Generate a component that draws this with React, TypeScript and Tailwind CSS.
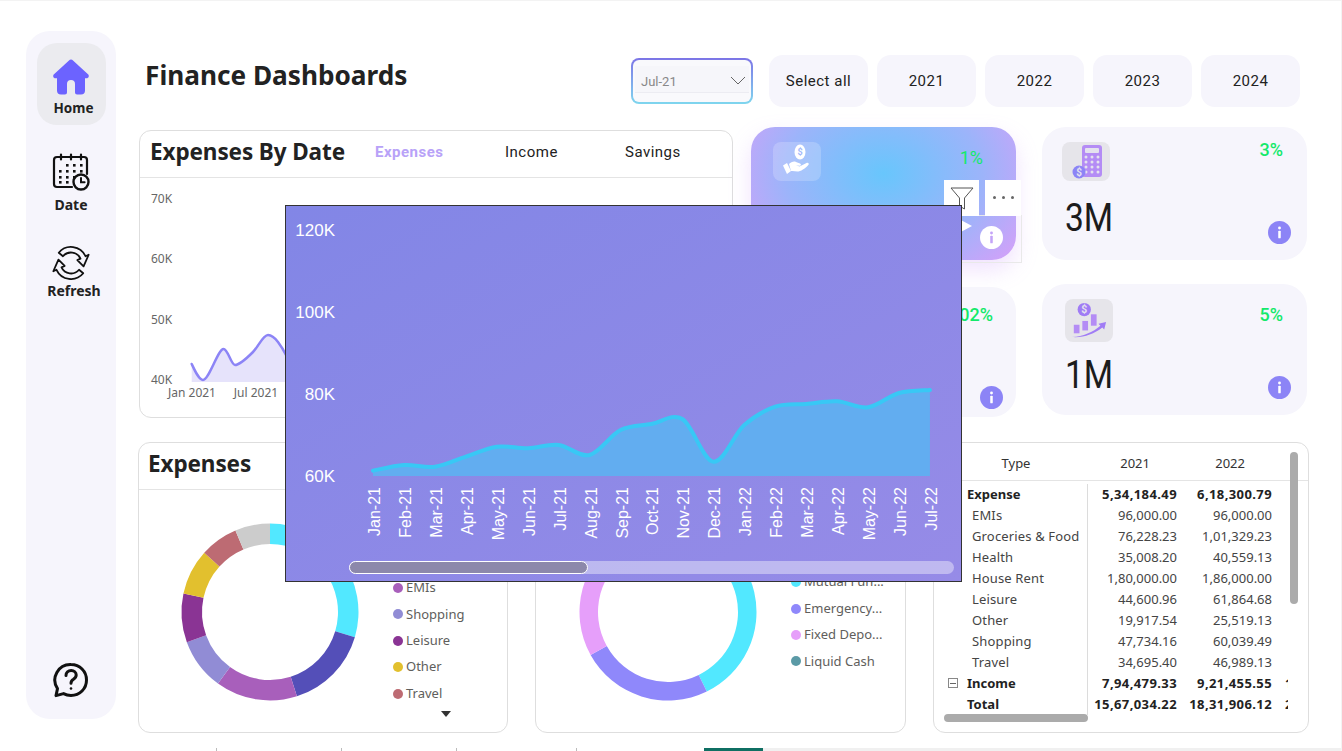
import { useMemo } from "react";

const bodyFont = "font-['Noto_Sans','Open_Sans',sans-serif]";
const dinFont = "font-['Roboto',sans-serif]";

const months = [
  "Jan-21", "Feb-21", "Mar-21", "Apr-21", "May-21", "Jun-21", "Jul-21", "Aug-21", "Sep-21", "Oct-21",
  "Nov-21", "Dec-21", "Jan-22", "Feb-22", "Mar-22", "Apr-22", "May-22", "Jun-22", "Jul-22",
];
const trend = [470.7, 465, 466.7, 456.7, 446.7, 448.3, 445, 455, 430, 424, 419, 461.7, 425, 406.7, 404, 401.3, 407.3, 393, 390];

const smooth = (pts: number[][]) => {
  let d = `M${pts[0][0]} ${pts[0][1]}`;
  for (let i = 0; i < pts.length - 1; i++) {
    const p0 = pts[Math.max(i - 1, 0)];
    const p1 = pts[i];
    const p2 = pts[i + 1];
    const p3 = pts[Math.min(i + 2, pts.length - 1)];
    const c1 = [p1[0] + (p2[0] - p0[0]) / 6, p1[1] + (p2[1] - p0[1]) / 6];
    const c2 = [p2[0] - (p3[0] - p1[0]) / 6, p2[1] - (p3[1] - p1[1]) / 6];
    d += ` C${c1[0]} ${c1[1]} ${c2[0]} ${c2[1]} ${p2[0]} ${p2[1]}`;
  }
  return d;
};

const polar = (r: number, deg: number) => {
  const a = ((deg - 90) * Math.PI) / 180;
  return [100 + r * Math.cos(a), 100 + r * Math.sin(a)];
};

const Donut = ({ segments, inner }: { segments: [number, number, string][]; inner: number }) => (
  <svg viewBox="0 0 200 200" className="h-[200px] w-[200px] shrink-0">
    {segments.map(([from, to, color]) => {
      const [ax, ay] = polar(88.5, from);
      const [bx, by] = polar(88.5, to);
      const [cx, cy] = polar(inner, to);
      const [dx, dy] = polar(inner, from);
      const large = to - from > 180 ? 1 : 0;
      return (
        <path
          key={`${color}${from}`}
          fill={color}
          d={`M${ax} ${ay} A88.5 88.5 0 ${large} 1 ${bx} ${by} L${cx} ${cy} A${inner} ${inner} 0 ${large} 0 ${dx} ${dy} Z`}
        />
      );
    })}
  </svg>
);

const Legend = ({ items, className }: { items: [string, string][]; className: string }) => (
  <div className={`flex flex-col ${className}`}>
    {items.map(([label, color]) => (
      <div key={label} className="flex h-[26.4px] items-center gap-[3px] text-[13px] text-[#605e5c]">
        <span className="h-[10px] w-[10px] rounded-full" style={{ backgroundColor: color }} />
        <span>{label}</span>
      </div>
    ))}
  </div>
);

const InfoDot = ({ light }: { light?: boolean }) => (
  <div className={`flex h-[23px] w-[23px] items-center justify-center rounded-full ${light ? "bg-white" : "bg-[#8c84f6]"}`}>
    <svg viewBox="0 0 10 14" className="h-[13px] w-[9px]">
      <circle cx="5" cy="2" r="1.6" fill={light ? "#c3a3f8" : "#fff"} />
      <rect x="3.6" y="5" width="2.8" height="8.5" rx="1" fill={light ? "#c3a3f8" : "#fff"} />
    </svg>
  </div>
);

const HomeIcon = () => (
  <svg viewBox="0 0 38 38" className="h-[38px] w-[38px]">
    <path
      d="M19 1.5c.8 0 1.5.3 2 .9L36 16.2c1.6 1.5.7 4-1.5 4H33v12.3a4 4 0 0 1-4 4h-4a2 2 0 0 1-2-2V26a4 4 0 0 0-8 0v8.500a2 2 0 0 1-2 2H9a4 4 0 0 1-4-4V20.200H3.500c-2.200 0-3.100-2.500-1.500-4L17 2.400c.5-.6 1.200-.9 2-.9Z"
      fill="#6c63ff"
    />
  </svg>
);

const CalendarIcon = () => (
  <svg viewBox="0 0 38 38" className="h-[38px] w-[38px]" fill="none" stroke="#111" strokeWidth="2.200" strokeLinecap="round">
    <path d="M20 34H5a3 3 0 0 1-3-3V7a3 3 0 0 1 3-3h27a3 3 0 0 1 3 3v14" />
    <path d="M9 1.500v5M19 1.500v5M29 1.500v5" />
    <g fill="#111" stroke="none">
      {[14, 21, 28].map((x) => <rect key={`a${x}`} x={x} y="11" width="2.6" height="2.6" />)}
      {[7, 14, 21, 28].map((x) => <rect key={`b${x}`} x={x} y="17" width="2.6" height="2.600" />)}
      {[7, 14, 21].map((x) => <rect key={`c${x}`} x={x} y="23" width="2.6" height="2.6" />)}
      <rect x="7" y="28" width="2.6" height="2.6" />
      <rect x="14" y="28" width="2.6" height="2.6" />
    </g>
    <circle cx="29" cy="29" r="7.500" strokeWidth="2.400" fill="#f6f5fc" />
    <path d="M29 25v4.300h3.600" strokeWidth="2" />
  </svg>
);

const RefreshIcon = () => (
  <svg viewBox="0 0 40 36" className="h-[36px] w-[40px]" fill="none" stroke="#111" strokeWidth="1.800" strokeLinejoin="round">
    <path d="M7.740 7.710A16 16 0 0 1 34.500 11.200L37.670 9.760 32.560 21.370 26.340 15.040 29.500 13.560A10.500 10.500 0 0 0 11.960 11.250Z" />
    <path d="M32.260 28.290A16 16 0 0 1 5.500 24.800L2.330 26.240 7.440 14.630 13.660 20.960 10.500 22.440A10.500 10.500 0 0 0 28.040 24.750Z" />
  </svg>
);

const HelpIcon = () => (
  <svg viewBox="0 0 36 36" className="h-[36px] w-[36px]" fill="none" stroke="#111" strokeWidth="3" strokeLinecap="round">
    <path d="M18 2.500c8.800 0 15.500 6.800 15.500 15.500S26.800 33.500 18 33.500c-2.800 0-5.300-.7-7.500-1.900l-7.500 2 1.500-7A15.500 15.500 0 0 1 18 2.500Z" strokeLinejoin="round" />
    <path d="M13 13.500c0-3 2.300-5 5.200-5s5 1.900 5 4.600c0 2-1.100 3.100-2.700 4.200-1.700 1.100-2.500 2-2.500 4" />
    <circle cx="18" cy="26.500" r="1.300" fill="#111" stroke="none" />
  </svg>
);

const HandIcon = () => (
  <svg viewBox="0 0 30 34" className="h-[34px] w-[30px]" fill="#fff">
    <ellipse cx="18" cy="8" rx="5.500" ry="7.500" />
    <path d="M1 21.500l4-2.500 4 8-4 3Z" />
    <path d="M7 20c2-2 5-3 7-2l4 1.500c1.500.5 1 2.500-.5 2.300l-3.500-.5 3.500 1.200 7-3.500c1.500-.7 3 .6 2 1.800-2 2.200-6 6-10 6.700-2.500.4-5-1-7.500-.5Z" />
    <text x="18" y="11" textAnchor="middle" fontSize="9" fontWeight="700" fill="#a3b8fb" fontFamily="Roboto, sans-serif">$</text>
  </svg>
);

const CalcIcon = () => (
  <svg viewBox="0 0 40 36" className="h-[36px] w-[40px]">
    <rect x="16" y="2" width="20" height="32" rx="3" fill="#b48cf5" />
    <rect x="19" y="5" width="14" height="5" rx="1" fill="#e4e2ee" />
    {[14, 19, 24, 29].map((y) => [20, 26, 32].map((x) => <circle key={`${x}${y}`} cx={x} cy={y} r="1.500" fill="#e4e2ee" />))}
    <circle cx="13" cy="29" r="6.500" fill="#8c84f6" />
    <text x="13" y="32.500" textAnchor="middle" fontSize="10" fontWeight="700" fill="#e4e2ee" fontFamily="Roboto, sans-serif">$</text>
  </svg>
);

const GrowthIcon = () => (
  <svg viewBox="0 0 40 40" className="h-[38px] w-[38px]">
    <circle cx="15" cy="9" r="7" fill="#a07cf5" />
    <text x="15" y="13" textAnchor="middle" fontSize="11" fontWeight="700" fill="#e4e2ee" fontFamily="Roboto, sans-serif">$</text>
    <rect x="4" y="25" width="6" height="9" fill="#b48cf5" />
    <rect x="13" y="21" width="6" height="10" fill="#b48cf5" />
    <rect x="22" y="14" width="6" height="12" fill="#b48cf5" />
    <path d="M2 38c12-1 22-5 30-12l-2-2 8-2-2 8-2-2C25 35 14 39 2 38Z" fill="#a07cf5" />
  </svg>
);

const NavItem = ({ icon, label, active, labelClass }: {
  icon: React.ReactNode; label: string; active?: boolean; labelClass: string;
}) => (
  <div className={`flex w-[69px] flex-col items-center rounded-[20px] ${active ? "h-[82px] bg-[#ebebef] pt-[15px]" : ""}`}>
    {icon}
    <span className={`${bodyFont} font-bold leading-[19px] text-[#222] ${labelClass}`}>{label}</span>
  </div>
);

const Kpi = ({ className, boxClass, pct, pctClass, value, icon }: {
  className: string; boxClass: string; pct: string; pctClass: string; value: string; icon: React.ReactNode;
}) => (
  <div className={`relative rounded-[24px] bg-[#f6f5fc] ${className}`}>
    <div className={`absolute top-[15px] flex w-[48px] items-center justify-center rounded-[8px] bg-[#e6e5ea] ${boxClass}`}>
      {icon}
    </div>
    <span className={`${dinFont} absolute text-[18px] font-medium leading-none text-[#14e96b] ${pctClass}`}>{pct}</span>
    <span className={`${dinFont} absolute left-[23px] top-[72px] origin-left scale-x-[0.86] text-[39px] leading-none text-[#1c1c1c]`}>{value}</span>
    <div className="absolute bottom-[16px] right-[16px]"><InfoDot /></div>
  </div>
);

const CardTitle = ({ children }: { children: string }) => (
  <h2 className={`${bodyFont} text-[22.5px] font-bold leading-none tracking-[-0.1px] text-[#222]`}>{children}</h2>
);

const rows: [string, string, string, boolean?][] = [
  ["Expense", "5,34,184.49", "6,18,300.79", true],
  ["EMIs", "96,000.00", "96,000.00"],
  ["Groceries & Food", "76,228.23", "1,01,329.23"],
  ["Health", "35,008.20", "40,559.13"],
  ["House Rent", "1,80,000.00", "1,86,000.00"],
  ["Leisure", "44,600.96", "61,864.68"],
  ["Other", "19,917.54", "25,519.13"],
  ["Shopping", "47,734.16", "60,039.49"],
  ["Travel", "34,695.40", "46,989.13"],
  ["Income", "7,94,479.33", "9,21,455.55", true],
  ["Total", "15,67,034.22", "18,31,906.12", true],
];

const ExpenseTable = () => (
  <div className={`${bodyFont} relative h-[291px] w-[376px] shrink-0 overflow-hidden rounded-[12px] border border-[#dedede] bg-white text-[13px] text-[#444]`}>
    <div className="flex h-[38px] items-center border-b border-[#e4e4e4] pt-[5px] text-[#333]">
      <span className="w-[154px] pl-[10px] text-center">Type</span>
      <span className="w-[89px] pr-[27px] text-right">2021</span>
      <span className="w-[95px] pr-[27px] text-right">2022</span>
    </div>
    <div className="flex flex-col pt-[3px]">
      {rows.map(([name, a, b, bold]) => (
        <div key={name} className={`flex h-[21px] items-center whitespace-nowrap ${bold ? "font-bold text-[#222]" : ""}`}>
          <span className={`relative h-full w-[154px] border-r border-[#dcdcdc] leading-[21px] ${bold ? "pl-[33px]" : "pl-[38px] tracking-[0.15px]"}`}>
            {name === "Income" && (
              <span className="absolute left-[14px] top-[5px] flex h-[10px] w-[10px] items-center justify-center border border-[#888]">
                <span className="h-px w-[6px] bg-[#666]" />
              </span>
            )}
            {name}
          </span>
          <span className={`w-[89px] text-right ${bold ? "tracking-[0.4px]" : ""}`}>{a}</span>
          <span className={`w-[95px] text-right ${bold ? "tracking-[0.4px]" : ""}`}>{b}</span>
          {name === "Income" && <span className="ml-[13px] w-[3px] overflow-hidden">1</span>}
          {name === "Total" && <span className="ml-[13px] w-[3px] overflow-hidden">2</span>}
        </div>
      ))}
    </div>
    <div className="absolute left-[356px] top-[9px] h-[152px] w-[8px] rounded-full bg-[#ababab]" />
    <div className="absolute bottom-[10px] left-[10px] h-[8px] w-[144px] rounded-full bg-[#ababab]" />
  </div>
);

const FocusChart = () => {
  const pts = useMemo(() => trend.map((y, i) => [373 - 286 + i * 30.94, y - 206]), []);
  const line = smooth(pts);
  return (
    <svg viewBox="0 0 675 375" className="block h-[375px] w-[675px]">
      {[["120K", 24], ["100K", 106], ["80K", 188], ["60K", 270]].map(([label, y]) => (
        <text key={label} x="49" y={Number(y) + 6} textAnchor="end" fontSize="17" fill="#fff" fontFamily="Liberation Sans, sans-serif">{label}</text>
      ))}
      <path d={`${line} L${pts[18][0]} 270 L${pts[0][0]} 270 Z`} fill="#62adf0" />
      <path d={line} fill="none" stroke="#38c8f5" strokeWidth="4" strokeLinecap="round" />
      {months.map((m, i) => (
        <text
          key={m}
          transform={`translate(${88 + i * 30.94 + 6} 281) rotate(-90)`}
          textAnchor="end"
          fontSize="16"
          fill="#fff"
          fontFamily="Liberation Sans, sans-serif"
        >
          {m}
        </text>
      ))}
    </svg>
  );
};

const App = () => {
  const miniLine = "M51.700 186C55 193 59 202 63 202 69 202 78 171 83.500 171 88 171 91 187 95 187 100 187 108 179 113 174 118 169 123 157 128 157 132 157 135 160 138 164 141 168 144 173 146 177";
  return (
    <div className={`${bodyFont} relative flex h-[751px] w-[1342px] overflow-hidden border-t border-r border-[#f3f3f3] bg-white`}>
      {/* left nav */}
      <aside className="ml-[26px] mt-[30px] flex h-[688px] w-[90px] shrink-0 flex-col items-center rounded-[24px] bg-[#f6f5fc] pt-[12px]">
        <NavItem active icon={<HomeIcon />} label="Home" labelClass="ml-[5px] mt-[3px] text-[13.5px]" />
        <div className="mt-[28px]"><NavItem icon={<CalendarIcon />} label="Date" labelClass="mt-[4px] text-[14px]" /></div>
        <div className="mt-[31px]"><NavItem icon={<RefreshIcon />} label="Refresh" labelClass="ml-[6px] text-[14px]" /></div>
        <div className="mt-auto pb-[21px]"><HelpIcon /></div>
      </aside>

      <main className="ml-[23px] flex w-[1170px] shrink-0 flex-col pt-[54px]">
        {/* header */}
        <header className="flex h-[72px] items-start">
          <h1 className="ml-[6px] w-[486px] pt-[4px] text-[26.2px] font-bold leading-[32px] text-[#222]">Finance Dashboards</h1>
          <div className="mt-[3px] flex h-[46px] w-[122px] items-center rounded-[8px] bg-gradient-to-b from-[#7c74e6] to-[#7ed6ee] p-[2px]">
            <div className="flex h-full w-full flex-col rounded-[6px] bg-[#f9f9fc] px-[2px] pt-[6px]">
              <div className="flex h-[27px] items-center justify-between border-b border-[#ececf2] bg-[#f6f6fa] pl-[6px] pr-[3px] pt-[6px]">
                <span className={`${dinFont} text-[13px] text-[#888]`}>Jul-21</span>
                <svg viewBox="0 0 16 9" className="mb-[3px] h-[9px] w-[16px]" fill="none" stroke="#666"><path d="M1 1l7 7 7-7" /></svg>
              </div>
            </div>
          </div>
          <div className={`${dinFont} ml-[16px] flex gap-[9px] text-[15px] tracking-[0.5px] text-[#222]`}>
            {["Select all", "2021", "2022", "2023", "2024"].map((y) => (
              <div key={y} className="flex h-[52px] w-[99px] items-center justify-center rounded-[14px] bg-[#f6f5fc] pt-[1px]">{y}</div>
            ))}
          </div>
        </header>

        {/* middle row */}
        <section className="flex h-[316px] items-start">
          <div className="mt-[3px] h-[288px] w-[594px] shrink-0 overflow-hidden rounded-[12px] border border-[#dedede] bg-white">
            <div className="flex h-[47px] items-center border-b border-[#e4e4e4] pb-[3px] pl-[10px]">
              <CardTitle>Expenses By Date</CardTitle>
              <div className={`${dinFont} flex text-[15px] tracking-[0.5px] text-[#222]`}>
                <span className="ml-[30px] w-[130px] font-bold text-[#b8a2f8]">Expenses</span>
                <span className="w-[120px]">Income</span>
                <span>Savings</span>
              </div>
            </div>
            <div className="relative flex">
              <div className="flex h-[240px] w-[51px] flex-col pl-[11px] pt-[13px] text-[12px] leading-[16px] text-[#666]">
                <span className="h-[60.5px]">70K</span>
                <span className="h-[60.500px]">60K</span>
                <span className="h-[60.500px]">50K</span>
                <span>40K</span>
              </div>
              <svg viewBox="51 0 160 240" className="h-[240px] w-[160px] overflow-visible">
                <path d={`${miniLine} L146 204 L51.700 204 Z`} fill="#e6e3fb" />
                <path d={miniLine} fill="none" stroke="#8c84f6" strokeWidth="2.500" strokeLinecap="round" />
                <text x="52" y="219" textAnchor="middle" fontSize="12" fill="#666" fontFamily="Noto Sans, sans-serif">Jan 2021</text>
                <text x="116" y="219" textAnchor="middle" fontSize="12" fill="#666" fontFamily="Noto Sans, sans-serif">Jul 2021</text>
              </svg>
            </div>
          </div>

          <div className="ml-[18px] grid w-[556px] grid-cols-[265px_265px] gap-x-[26px]">
            {/* gradient card sits under the visual header of the selected tile */}
            <div className="relative h-[133px] rounded-[24px] bg-[radial-gradient(ellipse_62%_95%_at_50%_35%,#68c6fc_0%,#9cb4fa_60%,#cfa2f9_100%)] shadow-[0_10px_22px_rgba(200,150,250,0.28)]">
              <div className="absolute left-[22px] top-[15px] flex h-[39px] w-[48px] items-center justify-center rounded-[8px] bg-white/20"><HandIcon /></div>
              <span className={`${dinFont} absolute right-[33px] top-[22px] text-[18px] leading-none text-[#14e96b]`}>1%</span>
              <div className="absolute bottom-[11px] right-[13px]"><InfoDot light /></div>
              <div className="absolute right-[-6px] top-[88px] h-[48px] w-[78px] border border-[#e9e9e9]" />
              <div className="absolute right-[37px] top-[53px] flex h-[36px] w-[35px] items-center justify-center bg-white">
                <svg viewBox="0 0 26 26" className="h-[26px] w-[26px]" fill="#fff" stroke="#555"><path d="M2 3h22l-8.500 10v11l-5-3v-8Z" /></svg>
              </div>
              <div className="absolute right-[-5px] top-[53px] flex h-[36px] w-[36px] items-center justify-center gap-[6px] bg-white">
                <span className="h-[3px] w-[3px] rounded-full bg-[#666]" />
                <span className="h-[3px] w-[3px] rounded-full bg-[#666]" />
                <span className="h-[3px] w-[3px] rounded-full bg-[#666]" />
              </div>
              <div className="absolute left-[208px] top-[92px] h-0 w-0 border-y-[7px] border-l-[13px] border-y-transparent border-l-white" />
            </div>
            <Kpi className="h-[133px]" boxClass="left-[20px] h-[39px]" pct="3%" pctClass="right-[24px] top-[14px]" value="3M" icon={<CalcIcon />} />
            <div className="relative mt-[27px] h-[130px] rounded-[24px] bg-[#f6f5fc]">
              <span className={`${dinFont} absolute right-[23px] top-[19px] text-[18px] font-medium leading-none text-[#14e96b]`}>02%</span>
              <div className="absolute bottom-[8px] right-[13px]"><InfoDot /></div>
            </div>
            <Kpi className="mt-[24px] h-[131px]" boxClass="left-[23px] h-[43px]" pct="5%" pctClass="right-[24px] top-[22px]" value="1M" icon={<GrowthIcon />} />
          </div>
        </section>

        {/* bottom row */}
        <section className="flex">
          <div className="-ml-px flex h-[291px] w-[370px] shrink-0 flex-col rounded-[12px] border border-[#dedede] bg-white">
            <div className="flex h-[47px] items-center border-b border-[#e4e4e4] pb-[3px] pl-[9px]"><CardTitle>Expenses</CardTitle></div>
            <div className="flex">
              <div className="ml-[31px] mt-[22px]">
                <Donut
                  inner={68}
                  segments={[
                    [0, 106.5, "#52e8ff"],
                    [106.5, 162.3, "#544fb8"],
                    [162.3, 216, "#a85fbb"],
                    [216, 250, "#918cd5"],
                    [250, 282, "#8a3494"],
                    [282, 312, "#e2c02e"],
                    [312, 337, "#bd6b73"],
                    [337, 360, "#cccccc"],
                  ]}
                />
              </div>
              <div className="ml-[23px] flex flex-col">
                <Legend
                  className="mt-[32px]"
                  items={[
                    ["House Rent", "#52e8ff"],
                    ["Groceries", "#544fb8"],
                    ["EMIs", "#a85fbb"],
                    ["Shopping", "#918cd5"],
                    ["Leisure", "#8a3494"],
                    ["Other", "#e2c02e"],
                    ["Travel", "#bd6b73"],
                  ]}
                />
                <div className="ml-[48px] mt-[4px] h-0 w-0 border-x-[5px] border-t-[6px] border-x-transparent border-t-[#333]" />
              </div>
            </div>
          </div>

          <div className="ml-[27px] flex h-[291px] w-[371px] shrink-0 rounded-[12px] border border-[#dedede] bg-white">
            <div className="ml-[32px] mt-[69px]">
              <Donut
                inner={70}
                segments={[
                  [340, 360, "#52e8ff"],
                  [0, 154, "#52e8ff"],
                  [154, 241, "#8f88fb"],
                  [241, 330, "#e69ffa"],
                  [330, 340, "#5b9aa6"],
                ]}
              />
            </div>
            <Legend
              className="ml-[23px] mt-[126px]"
              items={[
                ["Mutual Fun...", "#52e8ff"],
                ["Emergency...", "#8f88fb"],
                ["Fixed Depo...", "#e69ffa"],
                ["Liquid Cash", "#5b9aa6"],
              ]}
            />
          </div>

          <div className="ml-[27px]"><ExpenseTable /></div>
        </section>

        {/* page tabs, cut by the window edge */}
        <footer className="mr-[-33px] mt-[14px] flex h-[4px] items-end">
          <span className="ml-[77px] h-[3px] w-px bg-[#bbb]" />
          <span className="ml-[124px] h-[3px] w-px bg-[#bbb]" />
          <span className="ml-[114px] h-[3px] w-px bg-[#bbb]" />
          <span className="ml-[119px] h-[3px] w-px bg-[#bbb]" />
          <span className="ml-[127px] h-[3px] w-[59px] bg-[#0f6f63]" />
          <span className="h-[3px] flex-1 bg-[#f0f0f0]" />
        </footer>
      </main>

      {/* focus-mode chart lying over the page */}
      <div className="absolute left-[285px] top-[204px] h-[377px] w-[677px] border border-[#333] bg-gradient-to-br from-[#8286e6] to-[#968be7]">
        <FocusChart />
        <div className="absolute left-[63px] top-[355px] h-[13px] w-[605px] rounded-full bg-white/40">
          <div className="h-full w-[239px] rounded-full border border-white bg-[#8c88ab]" />
        </div>
      </div>
    </div>
  );
};

export default App;
